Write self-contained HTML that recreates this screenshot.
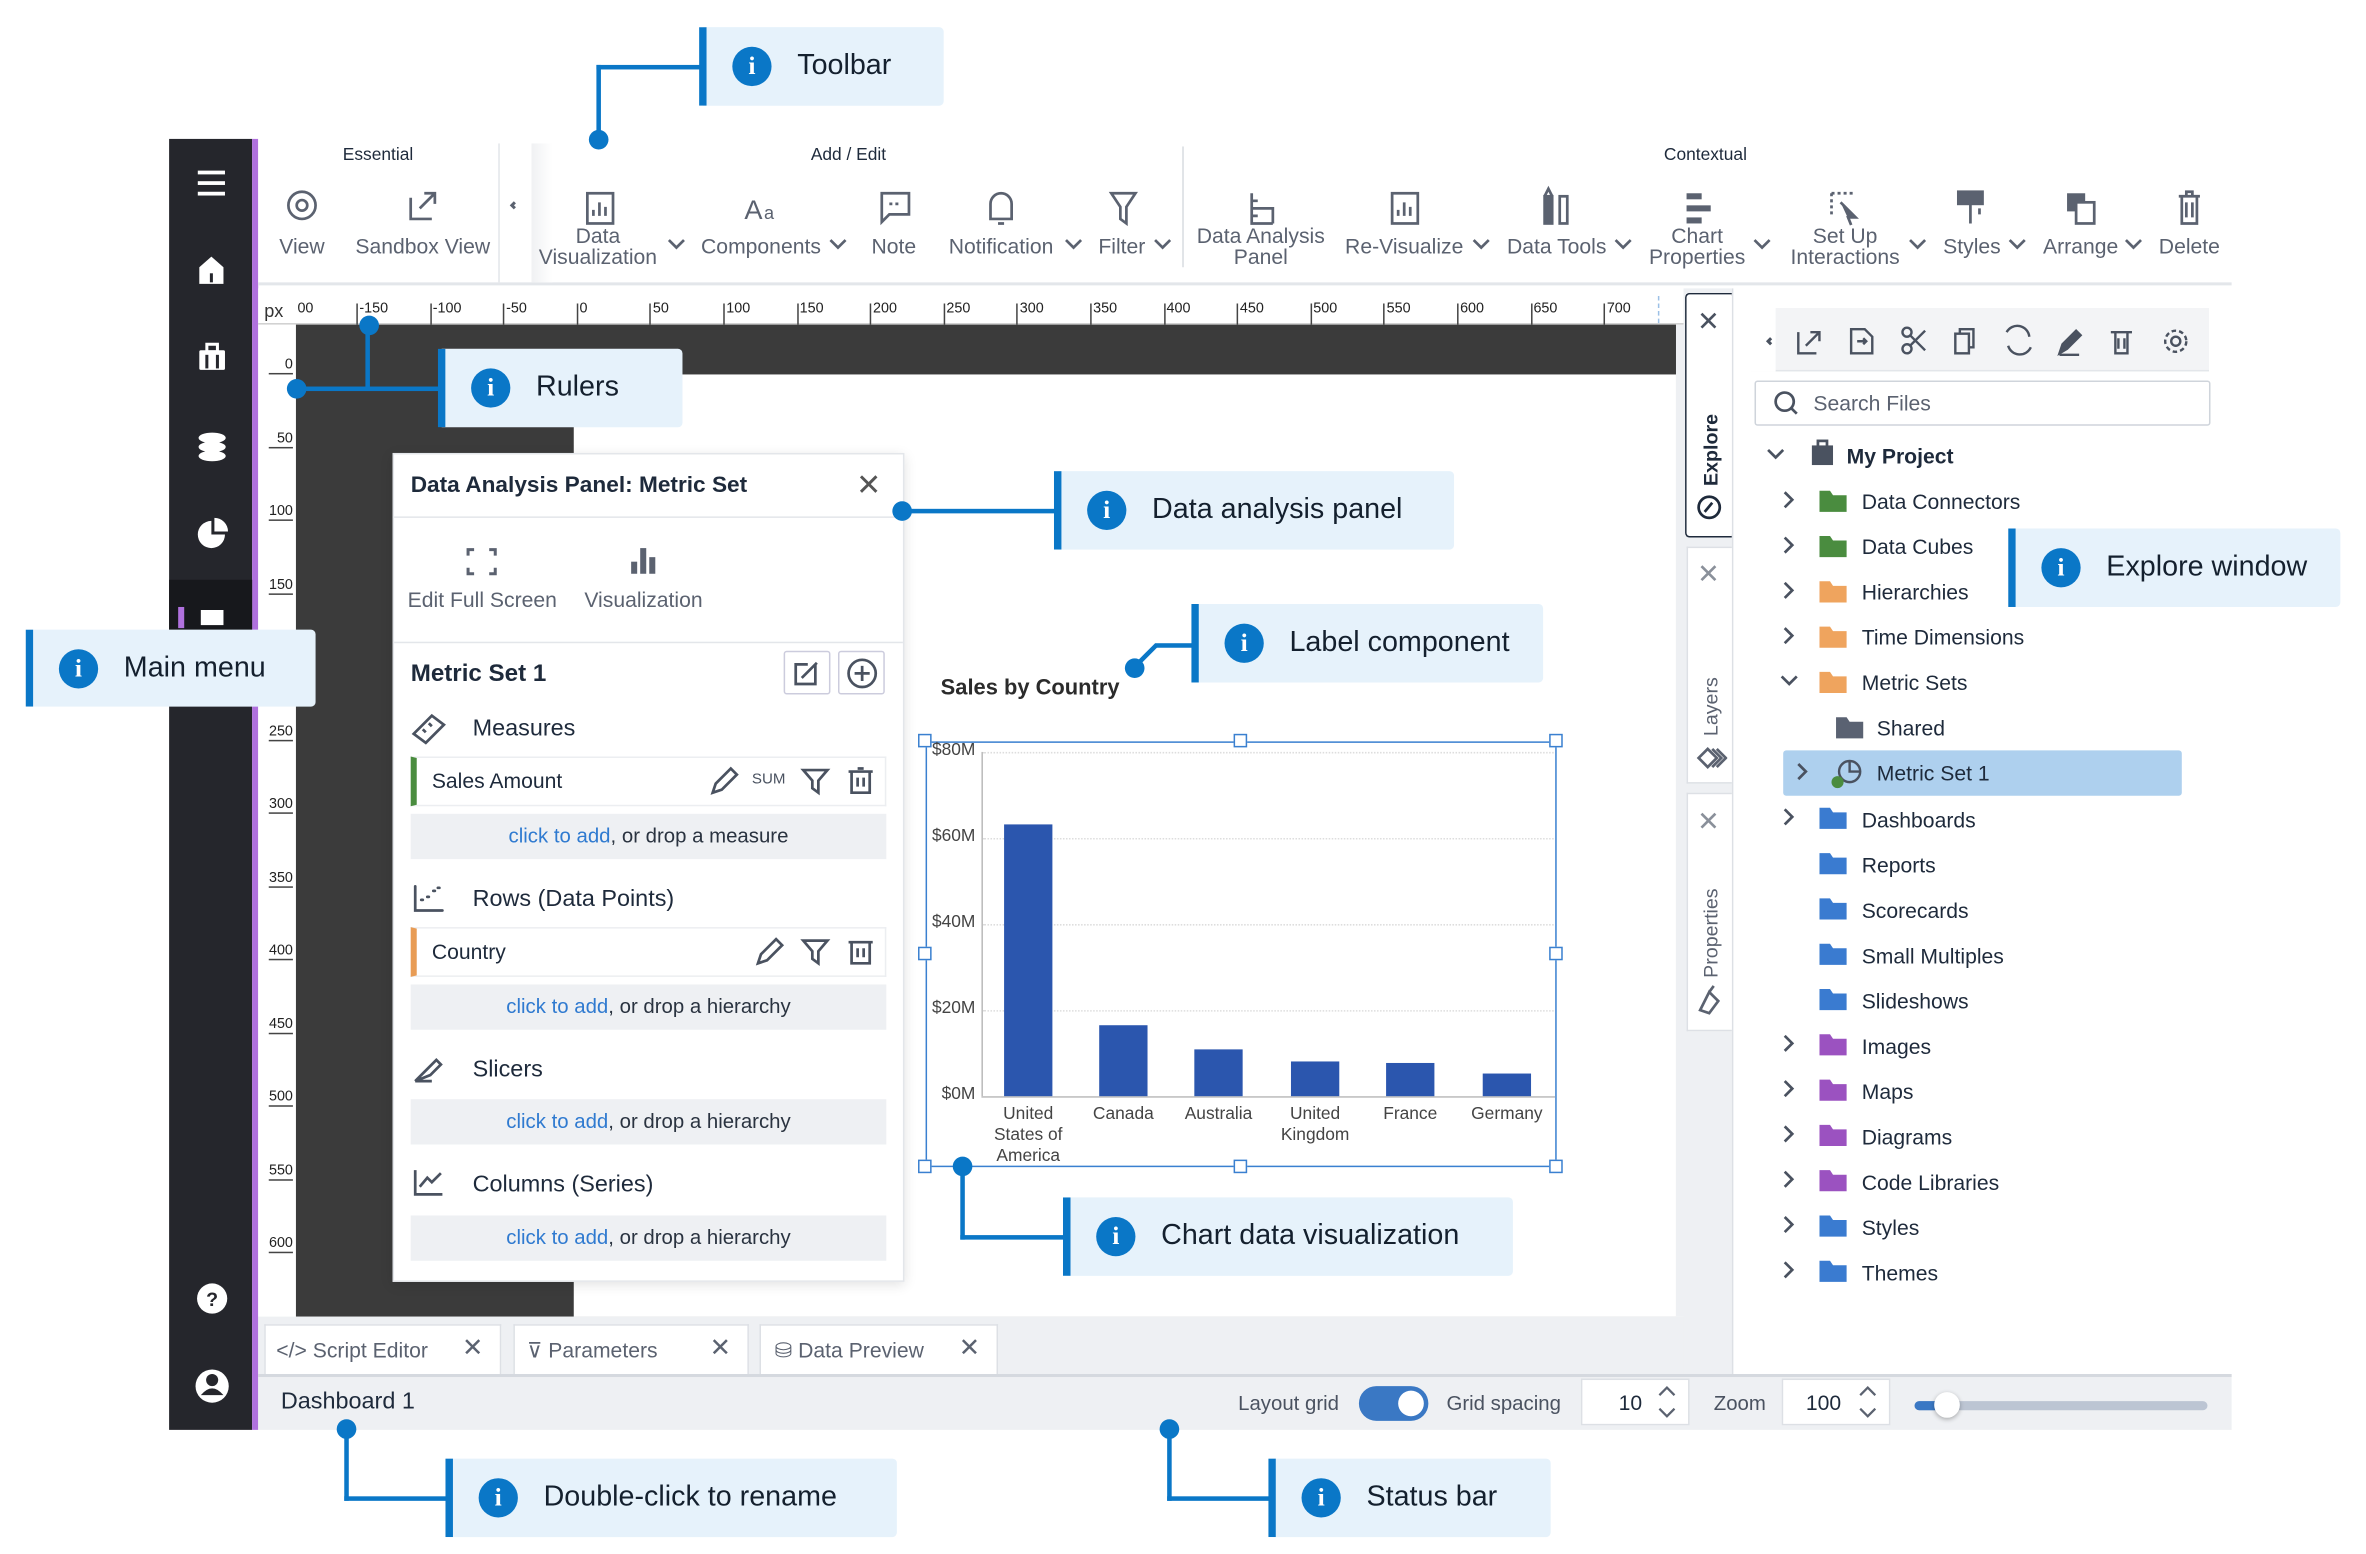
<!DOCTYPE html>
<html><head><meta charset="utf-8">
<style>
*{margin:0;padding:0;box-sizing:border-box}
html,body{width:2366px;height:1553px;overflow:hidden;background:#fff}
#w{position:absolute;left:0;top:0;width:1567px;height:1029px;transform:scale(1.5099);transform-origin:0 0;font-family:"Liberation Sans",sans-serif;color:#1e2a3b}
.a{position:absolute}
.co{position:absolute;background:#e6f2fb;border-left:5px solid #0a77c7;border-radius:0 3px 3px 0;z-index:5}
.co .ic{position:absolute;left:17px;top:50%;margin-top:-13px;width:26px;height:26px;border-radius:50%;background:#0a77c7;color:#fff;font-weight:bold;font-size:17px;text-align:center;line-height:26px;font-family:"Liberation Serif",serif}
.co .t{position:absolute;left:60px;top:50%;transform:translateY(-50%);font-size:19px;white-space:nowrap;color:#14202e}
.ln{position:absolute;background:#0a77c7;z-index:5}
.dot{position:absolute;width:13px;height:13px;border-radius:50%;background:#0a77c7;z-index:5}
.tb{position:absolute;font-size:14px;color:#5b6270;text-align:center;line-height:14px;white-space:nowrap}
.gl{position:absolute;font-size:11.5px;color:#1e2a3b}
.rl{position:absolute;font-size:9.5px;color:#222;top:199px}
.rt{position:absolute;top:201px;width:1px;height:14px;background:#444}
.vl{position:absolute;left:178px;font-size:9.5px;color:#222;border-bottom:1px solid #444;width:16px;text-align:right}
.row{position:absolute;left:1233px;font-size:14px;color:#1e2a3b}
.drop{position:absolute;left:272px;width:315px;height:30px;background:#eef0f3;font-size:13.5px;text-align:center;line-height:30px;color:#2a3340}
.drop b{font-weight:normal;color:#2f7ad0}
.fld{position:absolute;left:272px;width:315px;height:33px;border:1px solid #eceef1;background:#fff;font-size:14px;line-height:31px;padding-left:10px}
.sec{position:absolute;left:313px;font-size:15.5px;color:#1e2a3b}
.ylab{position:absolute;left:614px;width:32px;text-align:right;font-size:11.5px;color:#444}
.bar{position:absolute;background:#2b56ae;width:32px}
.xl{position:absolute;font-size:11.5px;color:#444;text-align:center;width:64px;line-height:14px}
.h{position:absolute;width:9px;height:9px;border:1.3px solid #3a80d0;background:#fff}
</style></head><body><div id="w">

<!-- sidebar -->
<div class="a" style="left:112px;top:92px;width:55px;height:855px;background:#25262c"></div>
<div class="a" style="left:167px;top:92px;width:4px;height:855px;background:#b071de"></div>
<div class="a" style="left:112px;top:384px;width:55px;height:46px;background:#17181c"></div>
<div class="a" style="left:118px;top:402px;width:4px;height:14px;background:#b071de"></div>
<svg class="a" style="left:112px;top:92px" width="55" height="855" viewBox="0 0 55 855" fill="#fff">
<rect x="19" y="21" width="18" height="2.5"/><rect x="19" y="28" width="18" height="2.5"/><rect x="19" y="35" width="18" height="2.5"/>
<path d="M20 85 L28 78 L36 85 V96 H20Z"/><rect x="27" y="89" width="2" height="6" fill="#25262c"/>
<rect x="20" y="140" width="17" height="13" rx="1"/><rect x="25" y="136" width="7" height="5" fill="none" stroke="#fff" stroke-width="2"/><rect x="24" y="143" width="2" height="9" fill="#25262c"/><rect x="31" y="143" width="2" height="9" fill="#25262c"/>
<ellipse cx="28.5" cy="198" rx="9" ry="3.5"/><ellipse cx="28.5" cy="204" rx="9" ry="3.5"/><ellipse cx="28.5" cy="210" rx="9" ry="3.5"/>
<path d="M28 253 A9 9 0 1 0 37 262 H28Z"/><path d="M30 251 A9 9 0 0 1 39 260 H30Z"/>
<rect x="21" y="312" width="15" height="10"/>
<circle cx="28.5" cy="768" r="10"/><text x="28.5" y="773" font-size="13" font-weight="bold" fill="#25262c" text-anchor="middle" font-family="Liberation Sans">?</text>
<circle cx="28.5" cy="826" r="11"/><circle cx="28.5" cy="822" r="4" fill="#25262c"/><path d="M21 832 Q28.5 823 36 832Z" fill="#25262c"/>
</svg>

<!-- toolbar -->
<div class="a" style="left:171px;top:92px;width:1307px;height:97px;background:#fff;border-bottom:2px solid #e3e6ea"></div>
<div class="a" style="left:330px;top:95px;width:1px;height:92px;background:#e3e6ea"></div>
<div class="a" style="left:352px;top:95px;width:14px;height:92px;background:linear-gradient(90deg,#f0f1f3,#fff)"></div>
<div class="a" style="left:783px;top:97px;width:1px;height:80px;background:#d8dce1"></div>
<div class="gl" style="left:227px;top:97px">Essential</div>
<div class="gl" style="left:537px;top:97px">Add / Edit</div>
<div class="gl" style="left:1102px;top:97px">Contextual</div>
<svg class="a" style="left:171px;top:120px" width="1307" height="34" fill="none" stroke="#5b6270" stroke-width="1.8">
<ellipse cx="29" cy="16" rx="9" ry="9"/><circle cx="29" cy="16" r="3.5"/>
<path d="M101 11 V25 H115 M107 18 L117 8 M110 8 H117 V15"/>
<path d="M170 14 L168 16 L170 18" stroke-width="2"/>
<rect x="218" y="8" width="17" height="20"/><path d="M222 23 V19 M226 23 V14 M230 23 V17"/>
<text x="322" y="25" font-size="18" fill="#5b6270" stroke="none" font-family="Liberation Sans">A</text><text x="335" y="25" font-size="12" fill="#5b6270" stroke="none" font-family="Liberation Sans">a</text>
<path d="M413 8 H431 V22 H418 L413 27Z"/><path d="M418 15 H426" stroke-dasharray="2 2"/>
<path d="M485 25 V15 A7 7 0 0 1 499 15 V25Z M490 28 H494"/>
<path d="M565 8 H581 L575 17 V28 L571 25 V17Z"/>
<path d="M658 8 V28 H672 M658 13 H662 M658 18 H662 M658 23 H662 M662 18 H672 V28"/>
<rect x="751" y="8" width="17" height="20"/><path d="M755 23 V19 M759 23 V14 M763 23 V17"/>
<rect x="852" y="10" width="5" height="18" fill="#5b6270"/><rect x="862" y="10" width="5" height="18"/><path d="M852 10 L854.5 5 L857 10"/>
<rect x="946" y="8" width="10" height="4" fill="#5b6270" stroke="none"/><rect x="946" y="16" width="16" height="4" fill="#5b6270" stroke="none"/><rect x="946" y="24" width="10" height="4" fill="#5b6270" stroke="none"/>
<path d="M1042 8 H1058 M1042 8 V24" stroke-dasharray="2 2"/><path d="M1048 14 L1058 24 L1053 24 L1055 29" fill="#5b6270"/>
<rect x="1126" y="7" width="16" height="8" fill="#5b6270"/><path d="M1134 15 V28 M1140 18 V22"/>
<rect x="1198" y="8" width="12" height="12" fill="#5b6270" stroke="none"/><rect x="1204" y="14" width="12" height="14" fill="#fff"/>
<path d="M1272 10 H1286 M1277 10 V7 H1281 V10 M1274 10 V28 H1284 V10 M1277 14 V24 M1281 14 V24"/>
</svg>
<div class="tb" style="left:180px;top:156px;width:40px">View</div>
<div class="tb" style="left:230px;top:156px;width:100px">Sandbox View</div>
<div class="tb" style="left:350px;top:149px;width:92px">Data<br>Visualization</div>
<div class="tb" style="left:456px;top:156px;width:96px">Components</div>
<div class="tb" style="left:572px;top:156px;width:40px">Note</div>
<div class="tb" style="left:620px;top:156px;width:86px">Notification</div>
<div class="tb" style="left:722px;top:156px;width:42px">Filter</div>
<div class="tb" style="left:788px;top:149px;width:94px">Data Analysis<br>Panel</div>
<div class="tb" style="left:886px;top:156px;width:88px">Re-Visualize</div>
<div class="tb" style="left:994px;top:156px;width:74px">Data Tools</div>
<div class="tb" style="left:1086px;top:149px;width:76px">Chart<br>Properties</div>
<div class="tb" style="left:1180px;top:149px;width:84px">Set Up<br>Interactions</div>
<div class="tb" style="left:1282px;top:156px;width:48px">Styles</div>
<div class="tb" style="left:1348px;top:156px;width:60px">Arrange</div>
<div class="tb" style="left:1426px;top:156px;width:48px">Delete</div>
<svg class="a" style="left:0;top:155px" width="1478" height="14" fill="none" stroke="#5b6270" stroke-width="1.8">
<path d="M443 4 L448 9 L453 4 M550 4 L555 9 L560 4 M706 4 L711 9 L716 4 M765 4 L770 9 L775 4 M976 4 L981 9 L986 4 M1070 4 L1075 9 L1080 4 M1162 4 L1167 9 L1172 4 M1265 4 L1270 9 L1275 4 M1331 4 L1336 9 L1341 4 M1408 4 L1413 9 L1418 4"/>
</svg>

<!-- rulers -->
<div class="a" style="left:171px;top:191px;width:944px;height:24px;background:#fff;border-bottom:1px solid #ccc"></div>
<div class="a" style="left:175px;top:199px;font-size:12px;color:#333">px</div>
<div class="rl" style="left:197px">00</div>
<div class="a" style="left:171px;top:215px;width:25px;height:657px;background:#fff"></div>
<div class="a" style="left:1098px;top:196px;width:1px;height:18px;border-left:1px dashed #9cc0e6"></div>
<div class="a" style="left:196px;top:215px;width:914px;height:657px;background:#3b3b3b"></div>
<div class="a" style="left:380px;top:248px;width:730px;height:624px;background:#fff"></div>
<div class="a" style="left:1110px;top:215px;width:5px;height:657px;background:#eef0f3"></div>

<!-- data analysis panel -->
<div class="a" style="left:260px;top:300px;width:339px;height:549px;background:#fff;border:1px solid #e3e6ea;box-shadow:0 2px 8px rgba(0,0,0,.12)"></div>
<div class="a" style="left:272px;top:313px;font-size:15px;font-weight:bold">Data Analysis Panel: Metric Set</div>
<div class="a" style="left:567px;top:309px;font-size:20px;color:#555">✕</div>
<div class="a" style="left:261px;top:342px;width:337px;height:1px;background:#e3e6ea"></div>
<div class="a" style="left:261px;top:425px;width:337px;height:1px;background:#e3e6ea"></div>
<svg class="a" style="left:300px;top:360px" width="150" height="24" fill="none" stroke="#5b6270" stroke-width="2">
<path d="M10 8 V4 H14 M24 4 H28 V8 M28 16 V20 H24 M14 20 H10 V16"/>
<rect x="118" y="12" width="4" height="8" fill="#5b6270" stroke="none"/><rect x="124" y="3" width="4" height="17" fill="#5b6270" stroke="none"/><rect x="130" y="9" width="4" height="11" fill="#5b6270" stroke="none"/>
</svg>
<div class="a" style="left:270px;top:389px;font-size:14px;color:#5b6270">Edit Full Screen</div>
<div class="a" style="left:387px;top:389px;font-size:14px;color:#5b6270">Visualization</div>
<div class="a" style="left:272px;top:438px;font-size:16px;font-weight:bold">Metric Set 1</div>
<div class="a" style="left:519px;top:431px;width:31px;height:29px;border:1px solid #ccd;border-radius:2px"></div>
<div class="a" style="left:555px;top:431px;width:31px;height:29px;border:1px solid #ccd;border-radius:2px"></div>
<svg class="a" style="left:519px;top:431px" width="70" height="30" fill="none" stroke="#4a5260" stroke-width="1.8">
<path d="M21 9 V22 H8 V9 H16 M12 18 L22 8"/><circle cx="52" cy="15" r="9"/><path d="M47 15 H57 M52 10 V20"/>
</svg>
<svg class="a" style="left:272px;top:470px" width="30" height="360" fill="none" stroke="#4a5260" stroke-width="1.8">
<path d="M2 16 L14 4 L22 10 L10 22Z M8 13 L10 15 M12 9 L14 11"/>
<path d="M3 117 V133 H21 M7 126 h1 M11 124 h1 M15 120 h1 M18 118 h1" stroke-linecap="round"/>
<path d="M3 246 L10 239 L17 232 L20 235 L13 242 Z M3 246 H14"/>
<path d="M3 305 V321 H21 M6 316 L11 310 L14 313 L20 307"/>
</svg>
<div class="sec" style="top:474px">Measures</div>
<div class="fld" style="top:501px;border-left:4px solid #4a8c3f">Sales Amount</div>
<div class="a" style="left:498px;top:511px;font-size:10px;color:#4a5260">SUM</div>
<div class="drop" style="top:539px"><b>click to add</b>, or drop a measure</div>
<div class="sec" style="top:587px">Rows (Data Points)</div>
<div class="fld" style="top:614px;border-left:4px solid #e89c55">Country</div>
<div class="drop" style="top:652px"><b>click to add</b>, or drop a hierarchy</div>
<div class="sec" style="top:700px">Slicers</div>
<div class="drop" style="top:728px"><b>click to add</b>, or drop a hierarchy</div>
<div class="sec" style="top:776px">Columns (Series)</div>
<div class="drop" style="top:805px"><b>click to add</b>, or drop a hierarchy</div>
<svg class="a" style="left:465px;top:505px" width="125" height="140" fill="none" stroke="#4a5260" stroke-width="1.8">
<path d="M7 20 L9 14 L19 4 L23 8 L13 18 Z M67 5 H83 L77 12 V20 L73 17 V12Z M97 6 H113 M99 6 V20 H111 V6 M103 10 V16 M107 10 V16 M103 4 H107"/>
<path d="M37 133 L39 127 L49 117 L53 121 L43 131 Z M67 118 H83 L77 125 V133 L73 130 V125Z M97 119 H113 M99 119 V133 H111 V119 M103 123 V129 M107 123 V129"/>
</svg>

<!-- chart -->
<div class="a" style="left:623px;top:448px;font-size:14.5px;font-weight:bold;color:#2b2b2b">Sales by Country</div>
<div class="a" style="left:613px;top:491px;width:418px;height:282px;border:1.3px solid #3a80d0"></div>
<div class="h" style="left:608px;top:486px"></div><div class="h" style="left:817px;top:486px"></div><div class="h" style="left:1026px;top:486px"></div>
<div class="h" style="left:608px;top:627px"></div><div class="h" style="left:1026px;top:627px"></div>
<div class="h" style="left:608px;top:768px"></div><div class="h" style="left:817px;top:768px"></div><div class="h" style="left:1026px;top:768px"></div>
<div class="a" style="left:650px;top:498px;width:1px;height:228px;background:#bbb"></div>
<div class="a" style="left:650px;top:726px;width:380px;height:1px;background:#bbb"></div>
<div class="a" style="left:651px;top:498px;width:378px;border-top:1px dotted #ddd"></div>
<div class="a" style="left:651px;top:555px;width:378px;border-top:1px dotted #ddd"></div>
<div class="a" style="left:651px;top:612px;width:378px;border-top:1px dotted #ddd"></div>
<div class="a" style="left:651px;top:669px;width:378px;border-top:1px dotted #ddd"></div>
<div class="ylab" style="top:491px">$80M</div><div class="ylab" style="top:548px">$60M</div><div class="ylab" style="top:605px">$40M</div><div class="ylab" style="top:662px">$20M</div><div class="ylab" style="top:719px">$0M</div>
<div class="bar" style="left:665px;top:546px;height:180px"></div>
<div class="bar" style="left:728px;top:679px;height:47px"></div>
<div class="bar" style="left:791px;top:695px;height:31px"></div>
<div class="bar" style="left:855px;top:703px;height:23px"></div>
<div class="bar" style="left:918px;top:704px;height:22px"></div>
<div class="bar" style="left:982px;top:711px;height:15px"></div>
<div class="xl" style="left:649px;top:731px">United States of America</div>
<div class="xl" style="left:712px;top:731px">Canada</div>
<div class="xl" style="left:775px;top:731px">Australia</div>
<div class="xl" style="left:839px;top:731px">United Kingdom</div>
<div class="xl" style="left:902px;top:731px">France</div>
<div class="xl" style="left:966px;top:731px">Germany</div>

<!-- bottom tabs & status -->
<div class="a" style="left:171px;top:872px;width:976px;height:38px;background:#eef0f3"></div>
<div class="a" style="left:175px;top:877px;width:157px;height:33px;background:#fff;border:1px solid #dde0e5;border-bottom:none"></div>
<div class="a" style="left:340px;top:877px;width:156px;height:33px;background:#fff;border:1px solid #dde0e5;border-bottom:none"></div>
<div class="a" style="left:503px;top:877px;width:158px;height:33px;background:#fff;border:1px solid #dde0e5;border-bottom:none"></div>
<div class="a" style="left:183px;top:886px;font-size:14px;color:#5b6270">&lt;/&gt; Script Editor</div>
<div class="a" style="left:349px;top:886px;font-size:14px;color:#5b6270">⊽ Parameters</div>
<div class="a" style="left:513px;top:886px;font-size:14px;color:#5b6270">⛁ Data Preview</div>
<div class="a" style="left:306px;top:883px;font-size:17px;color:#5b6270">✕</div>
<div class="a" style="left:470px;top:883px;font-size:17px;color:#5b6270">✕</div>
<div class="a" style="left:635px;top:883px;font-size:17px;color:#5b6270">✕</div>
<div class="a" style="left:171px;top:910px;width:1307px;height:37px;background:#eef0f3;border-top:2px solid #d5d9df"></div>
<div class="a" style="left:186px;top:920px;font-size:15.5px;color:#1e2a3b">Dashboard 1</div>
<div class="a" style="left:820px;top:922px;font-size:13.5px;color:#4a5260">Layout grid</div>
<div class="a" style="left:900px;top:918px;width:46px;height:23px;border-radius:12px;background:#3a78c4"></div>
<div class="a" style="left:926px;top:921px;width:17px;height:17px;border-radius:50%;background:#fff"></div>
<div class="a" style="left:958px;top:922px;font-size:13.5px;color:#4a5260">Grid spacing</div>
<div class="a" style="left:1047px;top:913px;width:72px;height:31px;background:#fff;border:1px solid #dde0e5"></div>
<div class="a" style="left:1072px;top:921px;font-size:14px">10</div>
<div class="a" style="left:1135px;top:922px;font-size:13.5px;color:#4a5260">Zoom</div>
<div class="a" style="left:1180px;top:913px;width:72px;height:31px;background:#fff;border:1px solid #dde0e5"></div>
<div class="a" style="left:1196px;top:921px;font-size:14px">100</div>
<svg class="a" style="left:1095px;top:914px" width="160" height="30" fill="none" stroke="#5b6270" stroke-width="1.5"><path d="M4 10 L9 5 L14 10 M4 19 L9 24 L14 19 M137 10 L142 5 L147 10 M137 19 L142 24 L147 19"/></svg>
<div class="a" style="left:1268px;top:928px;width:194px;height:6px;border-radius:3px;background:#bcc5d3"></div>
<div class="a" style="left:1268px;top:928px;width:18px;height:6px;border-radius:3px;background:#3a78c4"></div>
<div class="a" style="left:1281px;top:922px;width:17px;height:17px;border-radius:50%;background:#fff;box-shadow:0 1px 3px rgba(0,0,0,.3)"></div>

<!-- side tabs -->
<div class="a" style="left:1115px;top:191px;width:32px;height:719px;background:#eef0f3"></div>
<div class="a" style="left:1147px;top:191px;width:1px;height:719px;background:#dde0e5"></div>
<div class="a" style="left:1116px;top:194px;width:31px;height:162px;background:#fff;border:1px solid #1e2a3b;border-right:none;border-radius:3px 0 0 3px"></div>
<div class="a" style="left:1117px;top:362px;width:30px;height:157px;background:#fff;border:1px solid #dde0e5;border-right:none"></div>
<div class="a" style="left:1117px;top:525px;width:30px;height:158px;background:#fff;border:1px solid #dde0e5;border-right:none"></div>
<div class="a" style="left:1124px;top:203px;font-size:18px;color:#4a5260">✕</div>
<div class="a" style="left:1124px;top:370px;font-size:18px;color:#8a909a">✕</div>
<div class="a" style="left:1124px;top:534px;font-size:18px;color:#8a909a">✕</div>
<div class="a" style="left:1133px;top:298px;transform:translate(-50%,-50%) rotate(-90deg);font-size:13px;font-weight:bold;white-space:nowrap">Explore</div>
<div class="a" style="left:1133px;top:468px;transform:translate(-50%,-50%) rotate(-90deg);font-size:13px;color:#5b6270;white-space:nowrap">Layers</div>
<div class="a" style="left:1133px;top:618px;transform:translate(-50%,-50%) rotate(-90deg);font-size:13px;color:#5b6270;white-space:nowrap">Properties</div>
<svg class="a" style="left:1120px;top:325px" width="24" height="350" fill="none" stroke="#1e2a3b" stroke-width="1.8"><circle cx="12" cy="11" r="7"/><path d="M9 14 L14 8"/>
<path d="M5 177 L11 171 L17 177 L11 183Z M14 171 L20 177 L14 183 M17 171 L23 177 L17 183" stroke="#5b6270"/>
<path d="M6 344 L12 332 L18 338 L12 346Z M12 332 L15 328" stroke="#5b6270"/></svg>

<!-- explore panel -->
<div class="a" style="left:1160px;top:204px;width:303px;height:42px;background:#f3f4f6;border-bottom:1px solid #e3e6ea"></div>
<div class="a" style="left:1160px;top:204px;width:16px;height:42px;background:#fff"></div>
<svg class="a" style="left:1165px;top:212px" width="295" height="28" fill="none" stroke="#4a5260" stroke-width="1.6">
<path d="M8 12 L6 14 L8 16" stroke-width="2"/>
<path d="M26 8 V22 H38 M31 17 L40 8 M34 8 H40 V14"/>
<path d="M61 6 H70 L75 11 V22 H61Z M65 14 H71 M69 12 L71 14 L69 16"/>
<circle cx="98" cy="19" r="3"/><circle cx="98" cy="8" r="3"/><path d="M100 10 L110 20 M100 17 L110 7"/>
<rect x="130" y="9" width="9" height="13"/><path d="M133 9 V6 H142 V18 H139"/>
<path d="M164 8 A8 8 0 0 1 179 11 M180 18 A8 8 0 0 1 165 17"/>
<path d="M199 22 L201 16 L210 7 L213 10 L204 19Z" fill="#4a5260"/><path d="M199 23 H212"/>
<path d="M233 8 H247 M236 8 V22 H244 V8 M238 12 V19 M242 12 V19"/>
<circle cx="276" cy="14" r="3"/><circle cx="276" cy="14" r="7" stroke-dasharray="3 2"/>
</svg>
<div class="a" style="left:1162px;top:252px;width:302px;height:30px;border:1px solid #cfd4db;border-radius:2px"></div>
<svg class="a" style="left:1173px;top:257px" width="20" height="20" fill="none" stroke="#4a5260" stroke-width="1.8"><circle cx="9" cy="9" r="6"/><path d="M13 13 L17 17"/></svg>
<div class="a" style="left:1201px;top:259px;font-size:14px;color:#5b6270">Search Files</div>

<div class="a" style="left:1181px;top:497px;width:264px;height:30px;background:#aed0ee;border-radius:2px"></div>
<svg class="a" style="left:1160px;top:290px" width="60" height="570" fill="none" stroke="#4a5260" stroke-width="1.8">
<path d="M11 8 L16 13 L21 8"/>
<path d="M22 36 L27 41 L22 46 M22 66 L27 71 L22 76 M22 96 L27 101 L22 106 M22 126 L27 131 L22 136 M20 158 L25 163 L30 158 M31 216 L36 221 L31 226 M22 246 L27 251 L22 256 M22 396 L27 401 L22 406 M22 426 L27 431 L22 436 M22 456 L27 461 L22 466 M22 486 L27 491 L22 496 M22 516 L27 521 L22 526 M22 546 L27 551 L22 556"/>
<rect x="40" y="5" width="14" height="13" fill="#4a5260" stroke="none"/><rect x="44" y="2" width="6" height="4"/>
</svg>
<svg class="a" style="left:1205px;top:320px" width="40" height="540">
<defs><g id="f"><path d="M0 0 H7 L9 3 H18 V14 H0Z"/></g></defs>
<g fill="#4a8c3f"><use href="#f" y="5"/><use href="#f" y="35"/></g>
<g fill="#efa45e"><use href="#f" y="65"/><use href="#f" y="95"/><use href="#f" y="125"/></g>
<g fill="#5a6272"><use href="#f" x="11" y="155"/></g>
<g fill="#3a7bd0"><use href="#f" y="215"/><use href="#f" y="245"/><use href="#f" y="275"/><use href="#f" y="305"/><use href="#f" y="335"/></g>
<g fill="#9b52c0"><use href="#f" y="365"/><use href="#f" y="395"/><use href="#f" y="425"/><use href="#f" y="455"/></g>
<g fill="#3a7bd0"><use href="#f" y="485"/><use href="#f" y="515"/></g>
<g fill="none" stroke="#4a5260" stroke-width="1.6"><circle cx="20" cy="191" r="7"/><path d="M20 184 V191 H27"/></g>
<circle cx="12" cy="198" r="4" fill="#4a8c3f"/>
</svg>
<div class="a" style="left:1223px;top:294px;font-size:14px;font-weight:bold">My Project</div>
<div class="row" style="top:324px">Data Connectors</div>
<div class="row" style="top:354px">Data Cubes</div>
<div class="row" style="top:384px">Hierarchies</div>
<div class="row" style="top:414px">Time Dimensions</div>
<div class="row" style="top:444px">Metric Sets</div>
<div class="row" style="top:474px;left:1243px">Shared</div>
<div class="row" style="top:504px;left:1243px">Metric Set 1</div>
<div class="row" style="top:535px">Dashboards</div>
<div class="row" style="top:565px">Reports</div>
<div class="row" style="top:595px">Scorecards</div>
<div class="row" style="top:625px">Small Multiples</div>
<div class="row" style="top:655px">Slideshows</div>
<div class="row" style="top:685px">Images</div>
<div class="row" style="top:715px">Maps</div>
<div class="row" style="top:745px">Diagrams</div>
<div class="row" style="top:775px">Code Libraries</div>
<div class="row" style="top:805px">Styles</div>
<div class="row" style="top:835px">Themes</div>

<!-- callouts -->
<div class="ln" style="left:395px;top:43px;width:3px;height:49px"></div>
<div class="ln" style="left:395px;top:43px;width:70px;height:3px"></div>
<div class="dot" style="left:390px;top:86px"></div>
<div class="co" style="left:463px;top:18px;width:162px;height:52px"><div class="ic">i</div><div class="t">Toolbar</div></div>

<div class="ln" style="left:242px;top:215px;width:3px;height:43px"></div>
<div class="ln" style="left:196px;top:256px;width:96px;height:3px"></div>
<div class="dot" style="left:238px;top:209px"></div>
<div class="dot" style="left:190px;top:251px"></div>
<div class="co" style="left:290px;top:231px;width:162px;height:52px"><div class="ic">i</div><div class="t">Rulers</div></div>

<div class="ln" style="left:597px;top:337px;width:103px;height:3px"></div>
<div class="dot" style="left:591px;top:332px"></div>
<div class="co" style="left:698px;top:312px;width:265px;height:52px"><div class="ic">i</div><div class="t">Data analysis panel</div></div>

<div class="ln" style="left:765px;top:426px;width:26px;height:3px"></div>
<div class="ln" style="left:765px;top:426px;width:3px;height:20px;transform:rotate(45deg);transform-origin:top left"></div>
<div class="dot" style="left:745px;top:436px"></div>
<div class="co" style="left:789px;top:400px;width:233px;height:52px"><div class="ic">i</div><div class="t">Label component</div></div>

<div class="co" style="left:1330px;top:350px;width:220px;height:52px"><div class="ic">i</div><div class="t">Explore window</div></div>
<div class="co" style="left:17px;top:417px;width:192px;height:51px"><div class="ic">i</div><div class="t">Main menu</div></div>

<div class="ln" style="left:636px;top:772px;width:3px;height:49px"></div>
<div class="ln" style="left:636px;top:818px;width:70px;height:3px"></div>
<div class="dot" style="left:631px;top:766px"></div>
<div class="co" style="left:704px;top:793px;width:298px;height:52px"><div class="ic">i</div><div class="t">Chart data visualization</div></div>

<div class="ln" style="left:228px;top:946px;width:3px;height:48px"></div>
<div class="ln" style="left:228px;top:991px;width:69px;height:3px"></div>
<div class="dot" style="left:223px;top:940px"></div>
<div class="co" style="left:295px;top:966px;width:299px;height:52px"><div class="ic">i</div><div class="t">Double-click to rename</div></div>

<div class="ln" style="left:773px;top:946px;width:3px;height:48px"></div>
<div class="ln" style="left:773px;top:991px;width:69px;height:3px"></div>
<div class="dot" style="left:768px;top:940px"></div>
<div class="co" style="left:840px;top:966px;width:187px;height:52px"><div class="ic">i</div><div class="t">Status bar</div></div>

<script>
(function(){var w=document.getElementById('w');var labs=['-150','-100','-50','0','50','100','150','200','250','300','350','400','450','500','550','600','650','700'];
for(var i=0;i<labs.length;i++){var x=236+48.6*i;var t=document.createElement('div');t.className='rt';t.style.left=x+'px';w.appendChild(t);var l=document.createElement('div');l.className='rl';l.style.left=(x+2)+'px';l.textContent=labs[i];w.appendChild(l);}
var v=['0','50','100','150','200','250','300','350','400','450','500','550','600'];
for(var j=0;j<v.length;j++){var d=document.createElement('div');d.className='vl';d.style.top=(236+48.5*j)+'px';d.textContent=v[j];w.appendChild(d);}
})();
</script>
</div></body></html>
